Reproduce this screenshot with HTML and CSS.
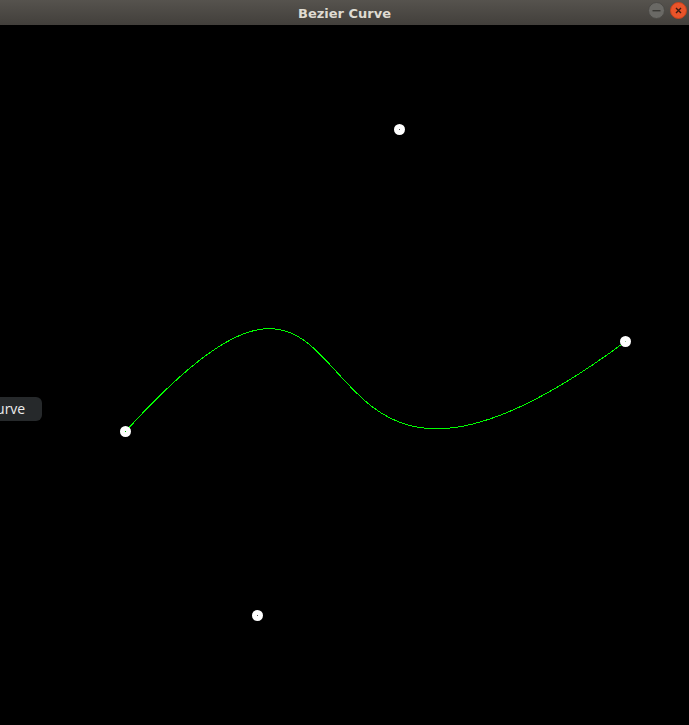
FILE: index.html
```html
<!DOCTYPE html>
<html>
<head>
<meta charset="utf-8">
<title>Bezier Curve</title>
<link rel="stylesheet" href="styles.css">
</head>
<body>
<div class="window">
  <header class="titlebar">
    <span class="title">Bezier Curve</span>
    <div class="controls">
      <span class="btn btn-min"><svg width="17" height="17" viewBox="0 0 17 17"><circle cx="8.5" cy="8.5" r="8" fill="#6a6965" stroke="#4a4945" stroke-width="1"/><rect x="4.5" y="8" width="8" height="1.4" fill="#3a3935"/></svg></span>
      <span class="btn btn-close"><svg width="17" height="17" viewBox="0 0 17 17"><circle cx="8.5" cy="8.5" r="8" fill="#e9542a" stroke="#c4421c" stroke-width="1"/><path d="M6 6 L11 11 M11 6 L6 11" stroke="#3a1a10" stroke-width="1.4"/></svg></span>
    </div>
  </header>
  <main class="canvas">
    <svg class="drawing" width="689" height="700" viewBox="0 25 689 700">
      <path d="M125.5 431.5 C399.5 129.5 257.5 615.5 625.5 341.5" fill="none" stroke="#00ff00" stroke-width="1" shape-rendering="crispEdges"/>
      <g fill="#ffffff">
        <circle cx="125.5" cy="431.5" r="5.5"/>
        <circle cx="399.5" cy="129.5" r="5.5"/>
        <circle cx="257.5" cy="615.5" r="5.5"/>
        <circle cx="625.5" cy="341.5" r="5.5"/>
      </g>
      <rect x="125" y="431" width="1" height="1" fill="#00c000"/>
      <rect x="399" y="129" width="1" height="1" fill="#555"/>
      <rect x="257" y="615" width="1" height="1" fill="#555"/>
      <rect x="625" y="341" width="1" height="1" fill="#9c9"/>
    </svg>
    <div class="tooltip">Bezier Curve</div>
  </main>
</div>
</body>
</html>
```

FILE: styles.css
```css
html, body {
  margin: 0;
  padding: 0;
  background: #000;
}
.window {
  width: 689px;
  height: 725px;
  display: flex;
  flex-direction: column;
  overflow: hidden;
}
.titlebar {
  height: 25px;
  flex: none;
  display: flex;
  align-items: center;
  justify-content: center;
  position: relative;
  background: linear-gradient(#56534e, #423f3b);
}
.title {
  font-family: "DejaVu Sans", sans-serif;
  font-weight: bold;
  font-size: 13px;
  color: #dfdbd2;
  padding-top: 1px;
}
.controls {
  position: absolute;
  right: 2px;
  top: 2px;
  display: flex;
  gap: 5px;
}
.btn {
  display: block;
  width: 17px;
  height: 17px;
}
.btn svg { display: block; }
.canvas {
  flex: 1;
  position: relative;
  background: #000;
}
.drawing {
  display: block;
}
.tooltip {
  position: absolute;
  left: -65px;
  top: 372px;
  height: 24px;
  line-height: 24px;
  padding: 0 17px 0 8px;
  border-radius: 6px;
  background: #26292b;
  color: #ececec;
  font-family: "Open Sans", sans-serif;
  font-size: 14px;
  white-space: nowrap;
}
```
